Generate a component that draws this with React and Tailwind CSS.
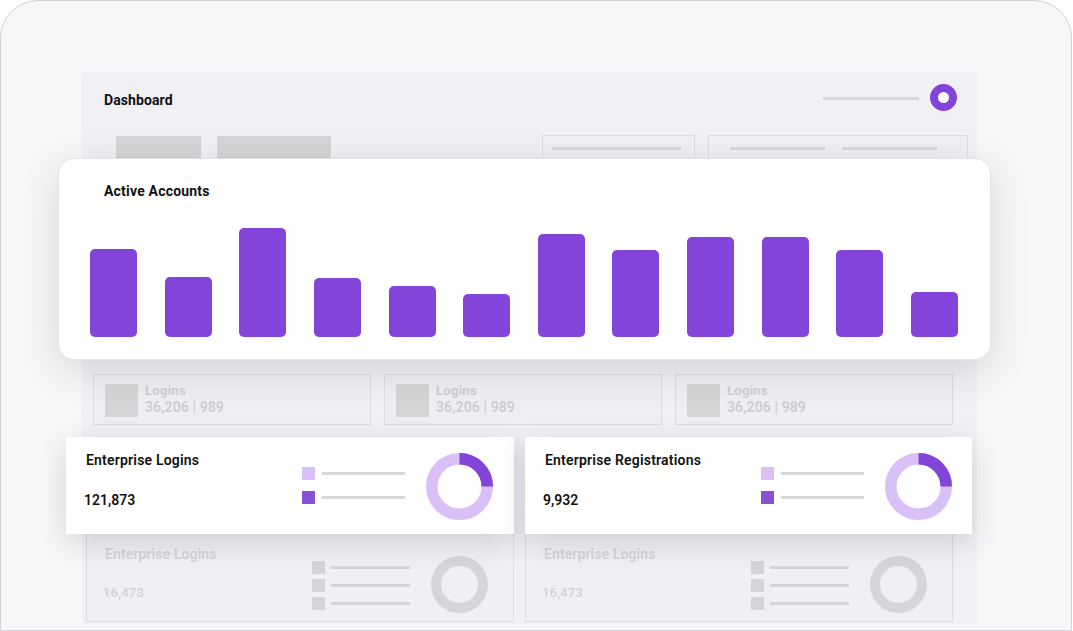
import React from "react";

const PURPLE = "#8344d9";
const LIGHT = "#d9c1f8";

const bars = [88, 60, 109, 59, 51, 43, 103, 87, 100, 100, 87, 45];

function Donut({ size, stroke, color, arc }) {
  const r = (size - stroke) / 2;
  const c = 2 * Math.PI * r;
  return (
    <svg width={size} height={size} viewBox={`0 0 ${size} ${size}`} className="shrink-0">
      <circle cx={size / 2} cy={size / 2} r={r} fill="none" stroke={color} strokeWidth={stroke} />
      {arc && (
        <circle
          cx={size / 2}
          cy={size / 2}
          r={r}
          fill="none"
          stroke={arc}
          strokeWidth={stroke}
          strokeDasharray={`${c / 4} ${c}`}
          transform={`rotate(-90 ${size / 2} ${size / 2})`}
        />
      )}
    </svg>
  );
}

function LoginCard() {
  return (
    <div className="flex h-[51px] w-[278px] items-start border border-[#dddce1] bg-[#efeef2] pl-[11px] pt-[9px]">
      <div className="h-[33px] w-[33px] bg-[#d5d5d7]" />
      <div className="-mt-[2px] ml-[7px] flex flex-col">
        <span className="text-[13px] font-semibold leading-[17px] tracking-[0.3px] text-[#cdcdd0]">Logins</span>
        <span className="text-[14px] font-semibold leading-[17px] tracking-[0.1px] text-[#cdcdd0]">36,206 | 989</span>
      </div>
    </div>
  );
}

function EnterpriseCard({ title, value, width }) {
  return (
    <div className={`relative z-10 flex h-[97px] items-start bg-white pl-[20px] shadow-[0_8px_28px_rgba(0,0,0,0.14)] ${width}`}>
      <div className="flex w-[216px] flex-col pt-[15px]">
        <span className="text-[14px] font-semibold leading-[16px] tracking-[0.2px] text-[#111]">{title}</span>
        <span className="-ml-[2px] mt-[24px] text-[14px] font-semibold leading-[16px] text-[#111]">{value}</span>
      </div>
      <div className="mt-[30px] flex flex-col gap-[11px]">
        <div className="flex items-center gap-[7px]">
          <div className="h-[13px] w-[13px] bg-[#d9c1f8]" />
          <div className="h-[3px] w-[83px] bg-[#d8d8d8]" />
        </div>
        <div className="flex items-center gap-[7px]">
          <div className="h-[13px] w-[13px] bg-[#8750d6]" />
          <div className="h-[3px] w-[83px] bg-[#d8d8d8]" />
        </div>
      </div>
      <div className="ml-[21px] mt-[16px]">
        <Donut size={67} stroke={11.5} color={LIGHT} arc={PURPLE} />
      </div>
    </div>
  );
}

function FadedCard() {
  return (
    <div className="flex h-[98px] w-[428px] items-start border border-[#dddce1] bg-[#f0eff4] pl-[18px]">
      <div className="flex w-[207px] flex-col pt-[21px]">
        <span className="text-[14px] font-semibold leading-[16px] tracking-[0.1px] text-[#d3d3d6]">Enterprise Logins</span>
        <span className="-ml-[2px] mt-[23px] text-[13px] font-medium leading-[16px] tracking-[0.2px] text-[#d3d3d6]">16,473</span>
      </div>
      <div className="mt-[36px] flex flex-col gap-[5px]">
        {[0, 1, 2].map((i) => (
          <div key={i} className="flex items-center gap-[6px]">
            <div className="h-[13px] w-[13px] bg-[#d5d5d7]" />
            <div className="h-[3px] w-[79px] bg-[#d5d5d7]" />
          </div>
        ))}
      </div>
      <div className="ml-[21px] mt-[31px]">
        <Donut size={57} stroke={10} color="#d6d6d8" />
      </div>
    </div>
  );
}

export default function App() {
  return (
    <div className="h-[631px] w-[1073px] overflow-hidden bg-white" style={{ fontFamily: "Roboto, 'Noto Sans', sans-serif" }}>
      <div className="h-[631px] w-[1072px] overflow-hidden rounded-t-[38px] border border-[#d2d2d6] bg-[#f7f7f9] pl-[81px] pt-[71px]">
        <div className="flex h-[552px] w-[895px] flex-col rounded-[4px] bg-[#f1f0f5]">
          {/* header */}
          <div className="flex h-[63px] items-start pl-[22px] pr-[20px]">
            <span className="mt-[20px] text-[14px] font-bold leading-[16px] tracking-[0.1px] text-[#111]">Dashboard</span>
            <div className="ml-auto mt-[25px] h-[3px] w-[96px] bg-[#d8d8d8]" />
            <div className="ml-[11px] mt-[12px] h-[27px] w-[27px] rounded-full border-[8px] border-[#8344d9] bg-white" />
          </div>
          {/* top row (mostly hidden) */}
          <div className="flex h-[23px] items-start">
            <div className="ml-[34px] mt-px h-[40px] w-[85px] bg-[#d5d5d7]" />
            <div className="ml-[16px] mt-px h-[40px] w-[114px] bg-[#d5d5d7]" />
            <div className="ml-[211px] h-[40px] w-[153px] border border-[#dddce1] pl-[9px] pt-[11px]">
              <div className="h-[3px] w-[129px] bg-[#d8d8d8]" />
            </div>
            <div className="ml-[13px] flex h-[40px] w-[260px] gap-[17px] border border-[#dddce1] pl-[21px] pt-[11px]">
              <div className="h-[3px] w-[95px] bg-[#d8d8d8]" />
              <div className="h-[3px] w-[95px] bg-[#d8d8d8]" />
            </div>
          </div>
          {/* active accounts */}
          <div className="relative z-20 -ml-[24px] flex h-[202px] w-[933px] flex-col rounded-[16px] border border-[#e4e4e8] bg-white pl-[31px] pr-[32px] shadow-[0_10px_40px_rgba(0,0,0,0.13)]">
            <span className="ml-[14px] mt-[24px] text-[14px] font-bold leading-[16px] tracking-[0.2px] text-[#111]">Active Accounts</span>
            <div className="mt-[21px] flex h-[117px] items-end justify-between">
              {bars.map((h, i) => (
                <div key={i} className="w-[47px] rounded-[5px] bg-[#8344d9]" style={{ height: h }} />
              ))}
            </div>
          </div>
          {/* logins row */}
          <div className="ml-[11px] mt-[14px] flex gap-[13px]">
            <LoginCard />
            <LoginCard />
            <LoginCard />
          </div>
          {/* enterprise row */}
          <div className="-ml-[16px] mt-[12px] flex gap-[11px]">
            <EnterpriseCard title="Enterprise Logins" value="121,873" width="w-[448px]" />
            <EnterpriseCard title="Enterprise Registrations" value="9,932" width="w-[447px]" />
          </div>
          {/* faded row */}
          <div className="-mt-[10px] ml-[4px] flex gap-[11px]">
            <FadedCard />
            <FadedCard />
          </div>
        </div>
      </div>
    </div>
  );
}
